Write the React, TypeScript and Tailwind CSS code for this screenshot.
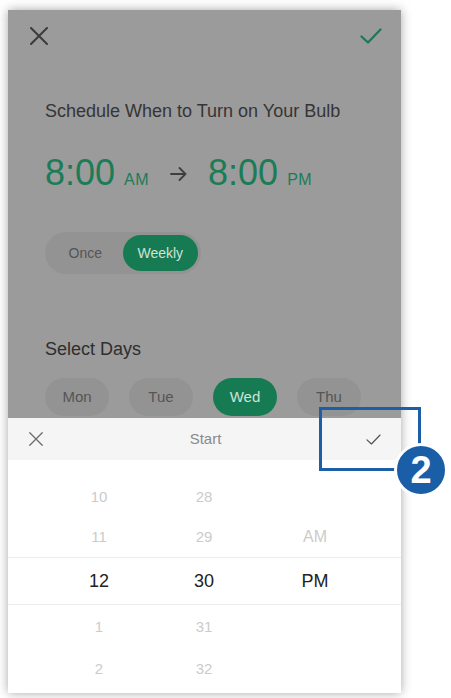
import React from "react";

const font = { fontFamily: '"Liberation Sans", Arial, sans-serif' };

function XIcon({ size, color, width }: { size: number; color: string; width: number }) {
  return (
    <svg width={size} height={size} viewBox="0 0 18 18" fill="none">
      <path d="M1 1L17 17M17 1L1 17" stroke={color} strokeWidth={width} strokeLinecap="round" />
    </svg>
  );
}

function CheckIcon({ w, h, color, width }: { w: number; h: number; color: string; width: number }) {
  return (
    <svg width={w} height={h} viewBox="0 0 22 16" fill="none">
      <path d="M1.5 8.5L8 14.5L20.5 1.5" stroke={color} strokeWidth={width} strokeLinecap="round" strokeLinejoin="round" />
    </svg>
  );
}

const days = [
  { label: "Mon", active: false },
  { label: "Tue", active: false },
  { label: "Wed", active: true },
  { label: "Thu", active: false },
];

// picker rows: [hour, minute, meridiem, selected, height]
const rows: [string, string, string, boolean, string][] = [
  ["10", "28", "", false, "h-[40px]"],
  ["11", "29", "AM", false, "h-[40px]"],
  ["12", "30", "PM", true, "h-[48px]"],
  ["1", "31", "", false, "h-[44px]"],
  ["2", "32", "", false, "h-[40px]"],
];

export default function App() {
  return (
    <div className="relative h-[698px] w-[451px] overflow-hidden bg-white pl-[8px] pt-[10px]" style={font}>
      <div className="flex h-[683px] w-[393px] flex-col overflow-hidden shadow-[0_0_10px_rgba(0,0,0,0.35)]">
        {/* dimmed schedule screen */}
        <div className="h-[408px] shrink-0 overflow-hidden bg-[#9b9b9b]">
          <div className="flex h-[52px] items-center justify-between pl-[22px] pr-[19px]">
            <XIcon size={18} color="#3b3b3b" width={2} />
            <CheckIcon w={22} h={16} color="#1d7655" width={2.2} />
          </div>

          <div className="px-[37px]">
            <p className="mt-[38px] text-[18px] leading-[22px] text-[#353535]">Schedule When to Turn on Your Bulb</p>

            <div className="mt-[31px] flex h-[40px] items-baseline text-[#1b7c57]">
              <span className="text-[36px] leading-[40px]">8:00</span>
              <span className="ml-[9px] text-[16px] tracking-[0.5px]">AM</span>
              <span className="mx-[21px] flex self-center pt-[2px]">
                <svg width="17" height="14" viewBox="0 0 17 14" fill="none">
                  <path d="M1 7H15.5M9.5 1L15.5 7L9.5 13" stroke="#3f3f3f" strokeWidth="1.8" strokeLinecap="round" strokeLinejoin="round" />
                </svg>
              </span>
              <span className="text-[36px] leading-[40px]">8:00</span>
              <span className="ml-[9px] text-[16px] tracking-[0.5px]">PM</span>
            </div>

            <div className="mt-[39px] flex h-[42px] w-[156px] items-center rounded-full bg-[#939393] p-[3px] text-[14px]">
              <div className="flex h-full w-[75px] items-center justify-center text-[#555555]">Once</div>
              <div className="flex h-full w-[76px] items-center justify-center rounded-full bg-[#167a53] text-[#cfe2d8]">
                Weekly
              </div>
            </div>

            <p className="mt-[64px] text-[18px] leading-[22px] text-[#2e2e2e]">Select Days</p>

            <div className="mt-[18px] flex gap-[20px]">
              {days.map((d) => (
                <div
                  key={d.label}
                  className={
                    d.active
                      ? "flex h-[38px] w-[64px] items-center justify-center rounded-full bg-[#167a53] text-[15px] text-[#cfe2d8]"
                      : "flex h-[38px] w-[64px] items-center justify-center rounded-full bg-[#939393] text-[15px] text-[#555555]"
                  }
                >
                  {d.label}
                </div>
              ))}
            </div>
          </div>
        </div>

        {/* bottom sheet time picker */}
        <div className="flex flex-1 flex-col bg-white">
          <div className="grid h-[42px] shrink-0 grid-cols-[1fr_auto_1fr] items-center bg-[#f5f5f5] pl-[21px] pr-[19px]">
            <XIcon size={14} color="#6a6a6a" width={1.6} />
            <span className="text-[15px] text-[#8a8a8a]">Start</span>
            <div className="flex justify-end">
              <CheckIcon w={17} h={11} color="#555555" width={1.8} />
            </div>
          </div>

          <div className="pt-[17px]">
            {rows.map(([h, m, ap, sel, height]) => (
              <div
                key={h}
                className={
                  sel
                    ? `flex ${height} items-center border-y border-[#ececec] pl-[36px] text-[18px] text-[#222222]`
                    : `flex ${height} items-center pl-[36px] text-[15px] text-[#cbcbcb]`
                }
              >
                <span className="w-[110px] text-center">{h}</span>
                <span className="w-[100px] text-center">{m}</span>
                <span className={sel ? "w-[122px] text-center" : "w-[122px] text-center text-[16px]"}>{ap}</span>
              </div>
            ))}
          </div>
        </div>
      </div>

      {/* tutorial callout */}
      <div className="absolute left-[319px] top-[407px] h-[64px] w-[102px] border-[3px] border-[#1d5fa6]" />
      <div className="absolute left-[394px] top-[443px] flex h-[54px] w-[54px] items-center justify-center rounded-full border-[3px] border-white bg-[#1b5ea8] text-[38px] font-bold leading-none text-white">
        2
      </div>
    </div>
  );
}
